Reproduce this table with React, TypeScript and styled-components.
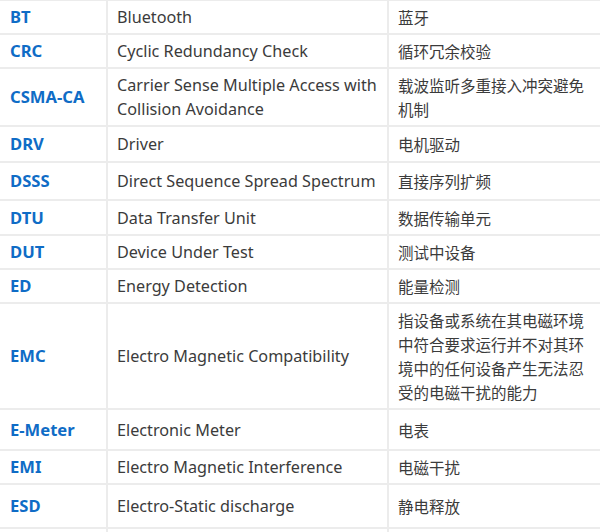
import React from "react";
import styled, { createGlobalStyle } from "styled-components";

const Global = createGlobalStyle`
  html, body { margin: 0; padding: 0; background: #fff; overflow: hidden; }
  body { width: 600px; height: 532px; }
`;

const Table = styled.table`
  width: 600px;
  border-collapse: collapse;
  table-layout: fixed;
  font-family: "Noto Sans", "Noto Sans CJK SC", sans-serif;
  font-size: 16.2px;
  line-height: 24px;
  color: #3b3b3b;
  margin-top: -1px;
`;

const Col = styled.col<{ $w: number }>`
  width: ${(p) => p.$w}px;
`;

const Row = styled.tr<{ $h: number }>`
  height: ${(p) => p.$h}px;
`;

const Cell = styled.td`
  border-top: 2px solid #ececec;
  border-bottom: 2px solid #ececec;
  padding: 2px 4px 2px 9px;
  vertical-align: middle;
  & + & { border-left: 2px solid #ececec; }
`;

const Abbr = styled(Cell)`
  color: #0f6cc6;
  font-weight: 700;
  font-size: 16.6px;
  padding-left: 10px;
`;

const Zh = styled(Cell)`
  font-family: "Noto Sans CJK SC", sans-serif;
  font-size: 15.5px;
  padding-left: 9px;
  padding-right: 6px;
`;

const rows: [string, string, string, number][] = [
  ["BT", "Bluetooth", "蓝牙", 34],
  ["CRC", "Cyclic Redundancy Check", "循环冗余校验", 34],
  ["CSMA-CA", "Carrier Sense Multiple Access with Collision Avoidance", "载波监听多重接入冲突避免机制", 58],
  ["DRV", "Driver", "电机驱动", 36],
  ["DSSS", "Direct Sequence Spread Spectrum", "直接序列扩频", 38],
  ["DTU", "Data Transfer Unit", "数据传输单元", 35],
  ["DUT", "Device Under Test", "测试中设备", 34],
  ["ED", "Energy Detection", "能量检测", 34],
  ["EMC", "Electro Magnetic Compatibility", "指设备或系统在其电磁环境中符合要求运行并不对其环境中的任何设备产生无法忍受的电磁干扰的能力", 106],
  ["E-Meter", "Electronic Meter", "电表", 41],
  ["EMI", "Electro Magnetic Interference", "电磁干扰", 34],
  ["ESD", "Electro-Static discharge", "静电释放", 44],
  ["", "", "", 40],
];

export default function App() {
  return (
    <>
      <Global />
      <Table>
        <colgroup>
          <Col $w={107} />
          <Col $w={281} />
          <Col $w={212} />
        </colgroup>
        <tbody>
          {rows.map(([a, e, z, h], i) => (
            <Row key={i} $h={h}>
              <Abbr>{a}</Abbr>
              <Cell>{e}</Cell>
              <Zh>{z}</Zh>
            </Row>
          ))}
        </tbody>
      </Table>
    </>
  );
}
